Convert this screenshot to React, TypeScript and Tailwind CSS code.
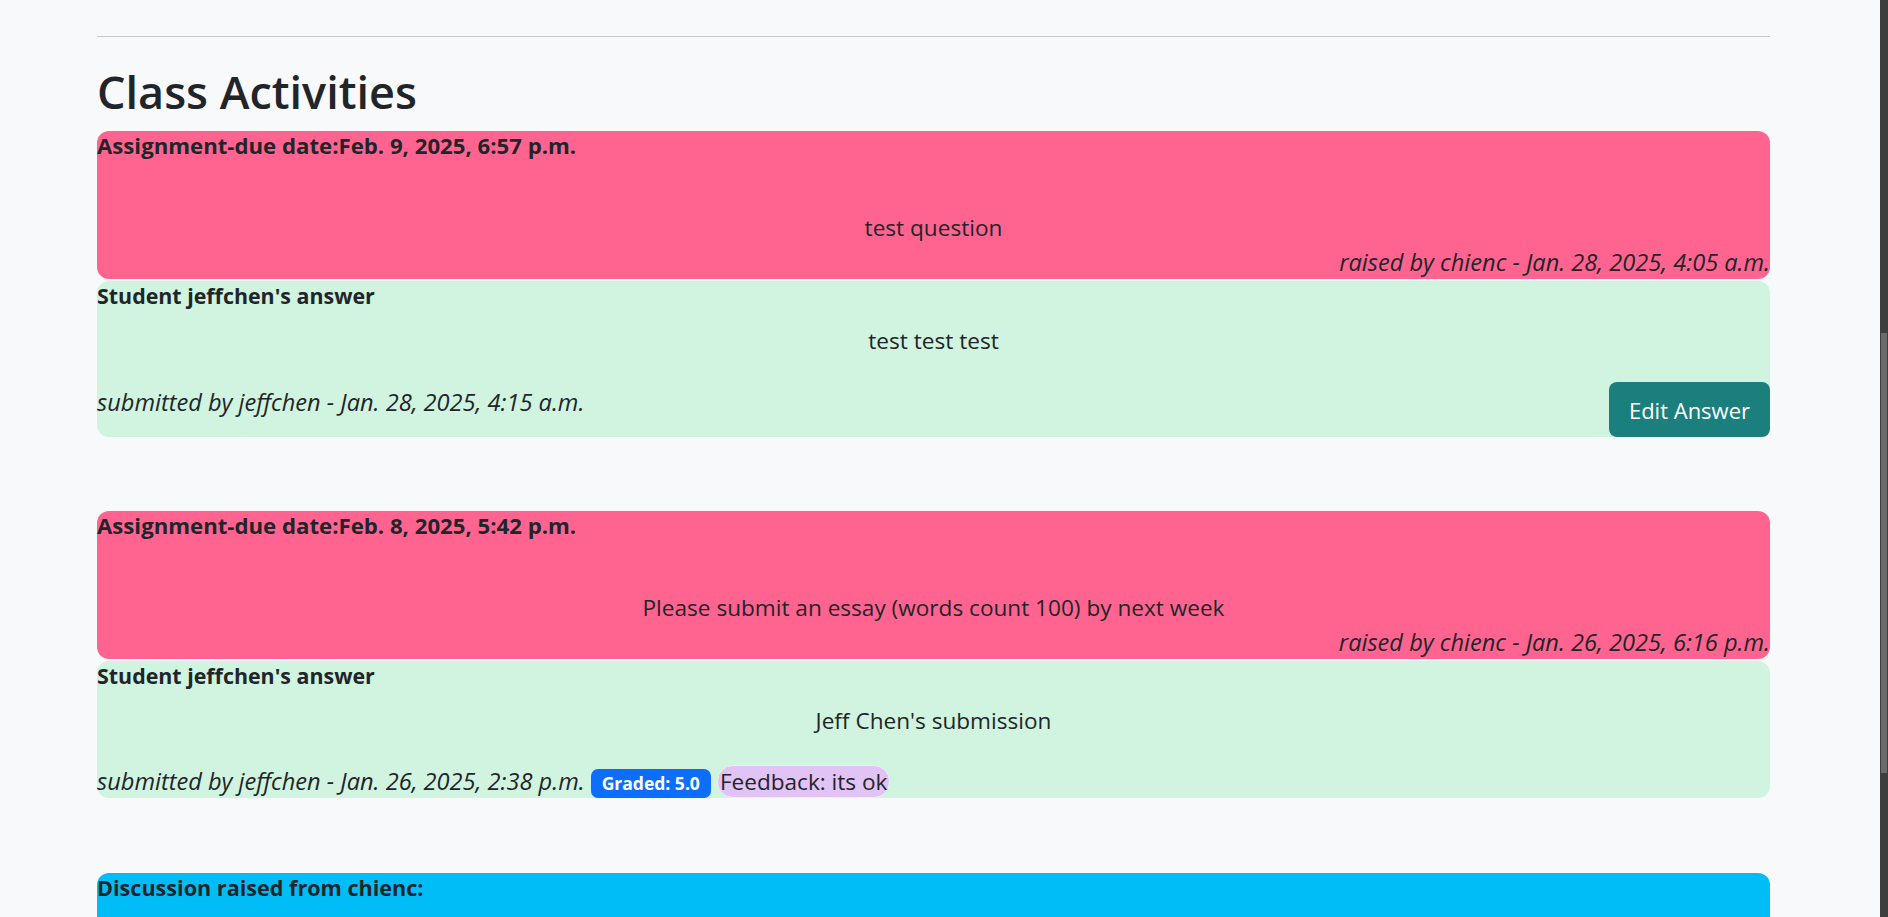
import React from 'react';

type Activity = {
  due: string;
  question: string;
  raised: string;
  answer: string;
  submitted: string;
  editable?: boolean;
  grade?: string;
  feedback?: string;
};

const activities: Activity[] = [
  {
    due: 'Feb. 9, 2025, 6:57 p.m.',
    question: 'test question',
    raised: 'raised by chienc - Jan. 28, 2025, 4:05 a.m.',
    answer: 'test test test',
    submitted: 'submitted by jeffchen - Jan. 28, 2025, 4:15 a.m.',
    editable: true,
  },
  {
    due: 'Feb. 8, 2025, 5:42 p.m.',
    question: 'Please submit an essay (words count 100) by next week',
    raised: 'raised by chienc - Jan. 26, 2025, 6:16 p.m.',
    answer: "Jeff Chen's submission",
    submitted: 'submitted by jeffchen - Jan. 26, 2025, 2:38 p.m.',
    grade: 'Graded: 5.0',
    feedback: 'Feedback: its ok',
  },
];

const AssignmentCard: React.FC<{ item: Activity }> = ({ item }) => (
  <div>
    {/* Question */}
    <div className="bg-[#ff6490] rounded-[12px] pb-[2px]">
      <div className="font-bold text-[22.2px] leading-[30px]">Assignment-due date:{item.due}</div>
      <div className="text-center leading-[30px] mt-[52px]">{item.question}</div>
      <div className="text-right italic text-[23.6px] leading-[30px] mt-[4px]">{item.raised}</div>
    </div>

    {/* Answer */}
    <div className="bg-[#d1f4e0] rounded-[12px] mt-[2px]">
      <div className="font-bold text-[21.4px] leading-[30px]">Student jeffchen's answer</div>
      <div className="text-center leading-[30px] mt-[15px]">{item.answer}</div>
      {item.editable ? (
        <div className="flex justify-between items-start mt-[26px]">
          <span className="italic text-[23.6px] leading-[30px] mt-[5px]">{item.submitted}</span>
          <button className="bg-[#1a7f7d] text-white text-[22px] rounded-[8px] h-[55px] px-[20px] leading-[36px]">
            Edit Answer
          </button>
        </div>
      ) : (
        <div className="flex items-end gap-[6px] mt-[29px]">
          <span className="italic text-[23.6px] leading-[33px]">{item.submitted}</span>
          <span className="bg-[#0d6efd] text-white font-bold text-[17.5px] leading-none rounded-[7px] px-[11px] h-[29px] flex items-center">
            {item.grade}
          </span>
          <span className="bg-[#e2c3f5] border border-[#f3ebf8] rounded-[16px] h-[33px] px-[2px] leading-[31px]">
            {item.feedback}
          </span>
        </div>
      )}
    </div>
  </div>
);

export default function App() {
  return (
    <div
      className="flex h-[917px] overflow-hidden bg-[#f8f9fa] text-[#212529] text-[22.6px]"
      style={{ fontFamily: '"Open Sans", "Noto Sans", sans-serif' }}
    >
      <main className="flex-1 pl-[97px] pt-[36px]">
        <div className="w-[1673px]">
          <hr className="border-0 border-t border-[#c6c7c8]" />
          <h2 className="text-[45px] font-semibold leading-[60px] mt-[25px] mb-[9px]">Class Activities</h2>

          <AssignmentCard item={activities[0]} />
          <div className="mt-[74px]">
            <AssignmentCard item={activities[1]} />
          </div>

          {/* Discussion */}
          <div className="bg-[#00bcf7] rounded-t-[12px] h-[200px] mt-[75px]">
            <div className="font-bold text-[21.6px] leading-[30px]">Discussion raised from chienc:</div>
          </div>
        </div>
      </main>

      {/* Scrollbar */}
      <aside className="w-[8px] bg-[#3e3e3e]">
        <div className="mt-[333px] h-[440px] mx-[1px] bg-[#6b6b6b]" />
      </aside>
    </div>
  );
}
